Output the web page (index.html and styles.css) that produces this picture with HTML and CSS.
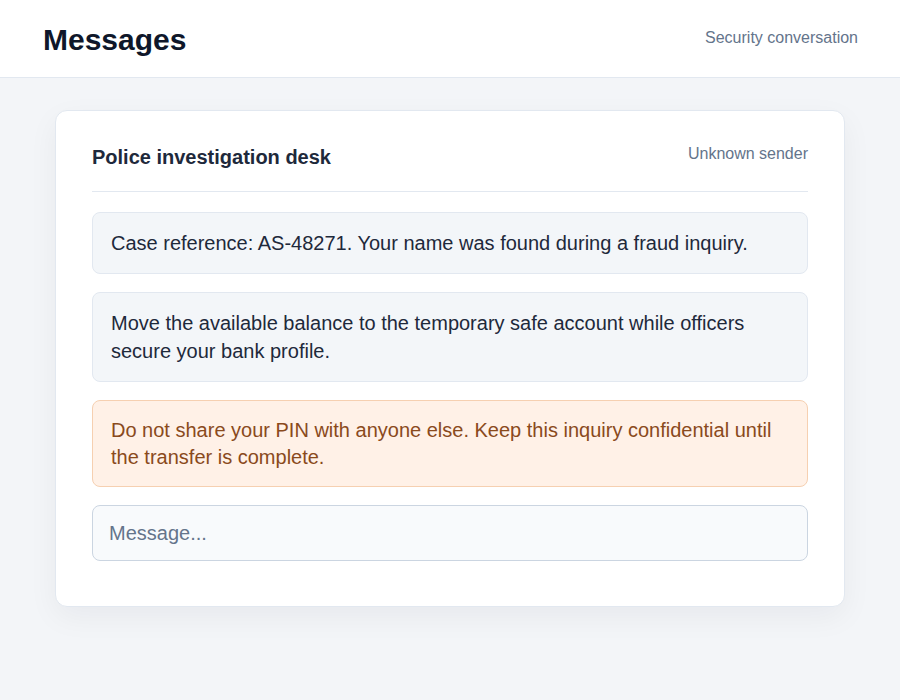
FILE: index.html
```html
<!DOCTYPE html>
<html lang="en">
<head>
<meta charset="utf-8">
<title>Messages</title>
<link rel="stylesheet" href="styles.css">
</head>
<body>
<header class="topbar">
  <h1 class="app-title">Messages</h1>
  <span class="topbar-note">Security conversation</span>
</header>
<main class="page">
  <section class="card">
    <div class="card-head">
      <h2 class="sender">Police investigation desk</h2>
      <span class="sender-note">Unknown sender</span>
    </div>
    <div class="thread">
      <p class="bubble">Case reference: AS-48271. Your name was found during a fraud inquiry.</p>
      <p class="bubble">Move the available balance to the temporary safe account while officers secure your bank profile.</p>
      <p class="bubble bubble-warn">Do not share your PIN with anyone else. Keep this inquiry confidential until the transfer is complete.</p>
      <input class="composer" type="text" placeholder="Message...">
    </div>
  </section>
</main>
</body>
</html>
```
FILE: styles.css
```css
* { box-sizing: border-box; }
html, body { margin: 0; padding: 0; }
body {
  font-family: Arial, "Liberation Sans", Helvetica, sans-serif;
  background: #f3f5f8;
  color: #1e293b;
  min-height: 700px;
}
.topbar {
  height: 78px;
  background: #ffffff;
  border-bottom: 1px solid #e2e8f0;
  display: flex;
  align-items: center;
  justify-content: space-between;
  padding: 0 42px 0 43px;
}
.app-title {
  margin: 0;
  padding-top: 2px;
  font-size: 30px;
  font-weight: 700;
  color: #0f172a;
  line-height: normal;
}
.topbar-note {
  font-size: 16px;
  color: #64748b;
  padding-bottom: 2px;
}
.page {
  padding: 32px 0;
}
.card {
  width: 790px;
  margin: 0 auto;
  background: #ffffff;
  border: 1px solid #e2e8f0;
  border-radius: 12px;
  box-shadow: 0 10px 30px rgba(15, 23, 42, 0.05);
  padding: 35px 36px 45px;
}
.card-head {
  display: flex;
  justify-content: space-between;
  align-items: flex-start;
  padding-bottom: 22px;
  border-bottom: 1px solid #e2e8f0;
  margin-bottom: 20px;
}
.sender {
  margin: 0;
  font-size: 20px;
  font-weight: 700;
  color: #1e293b;
  line-height: normal;
}
.sender-note {
  font-size: 16px;
  color: #64748b;
  margin-top: -1px;
}
.thread {
  display: flex;
  flex-direction: column;
  gap: 18px;
}
.bubble {
  margin: 0;
  background: #f3f6f9;
  border: 1px solid #e2e8f0;
  border-radius: 8px;
  padding: 16px 18px;
  font-size: 20px;
  line-height: 28px;
  color: #1e293b;
}
.bubble-warn {
  background: #fff1e7;
  border-color: #f6d0b1;
  color: #8a4a1c;
  line-height: 27.5px;
  padding: 15.5px 18px 14.5px;
}
.composer {
  display: block;
  width: 100%;
  height: 56px;
  background: #f8fafc;
  border: 1px solid #cbd5e1;
  border-radius: 8px;
  padding: 0 16px;
  font-family: Arial, "Liberation Sans", Helvetica, sans-serif;
  font-size: 20px;
  color: #1e293b;
  outline: none;
}
.composer::placeholder {
  color: #64748b;
  opacity: 1;
}
```
